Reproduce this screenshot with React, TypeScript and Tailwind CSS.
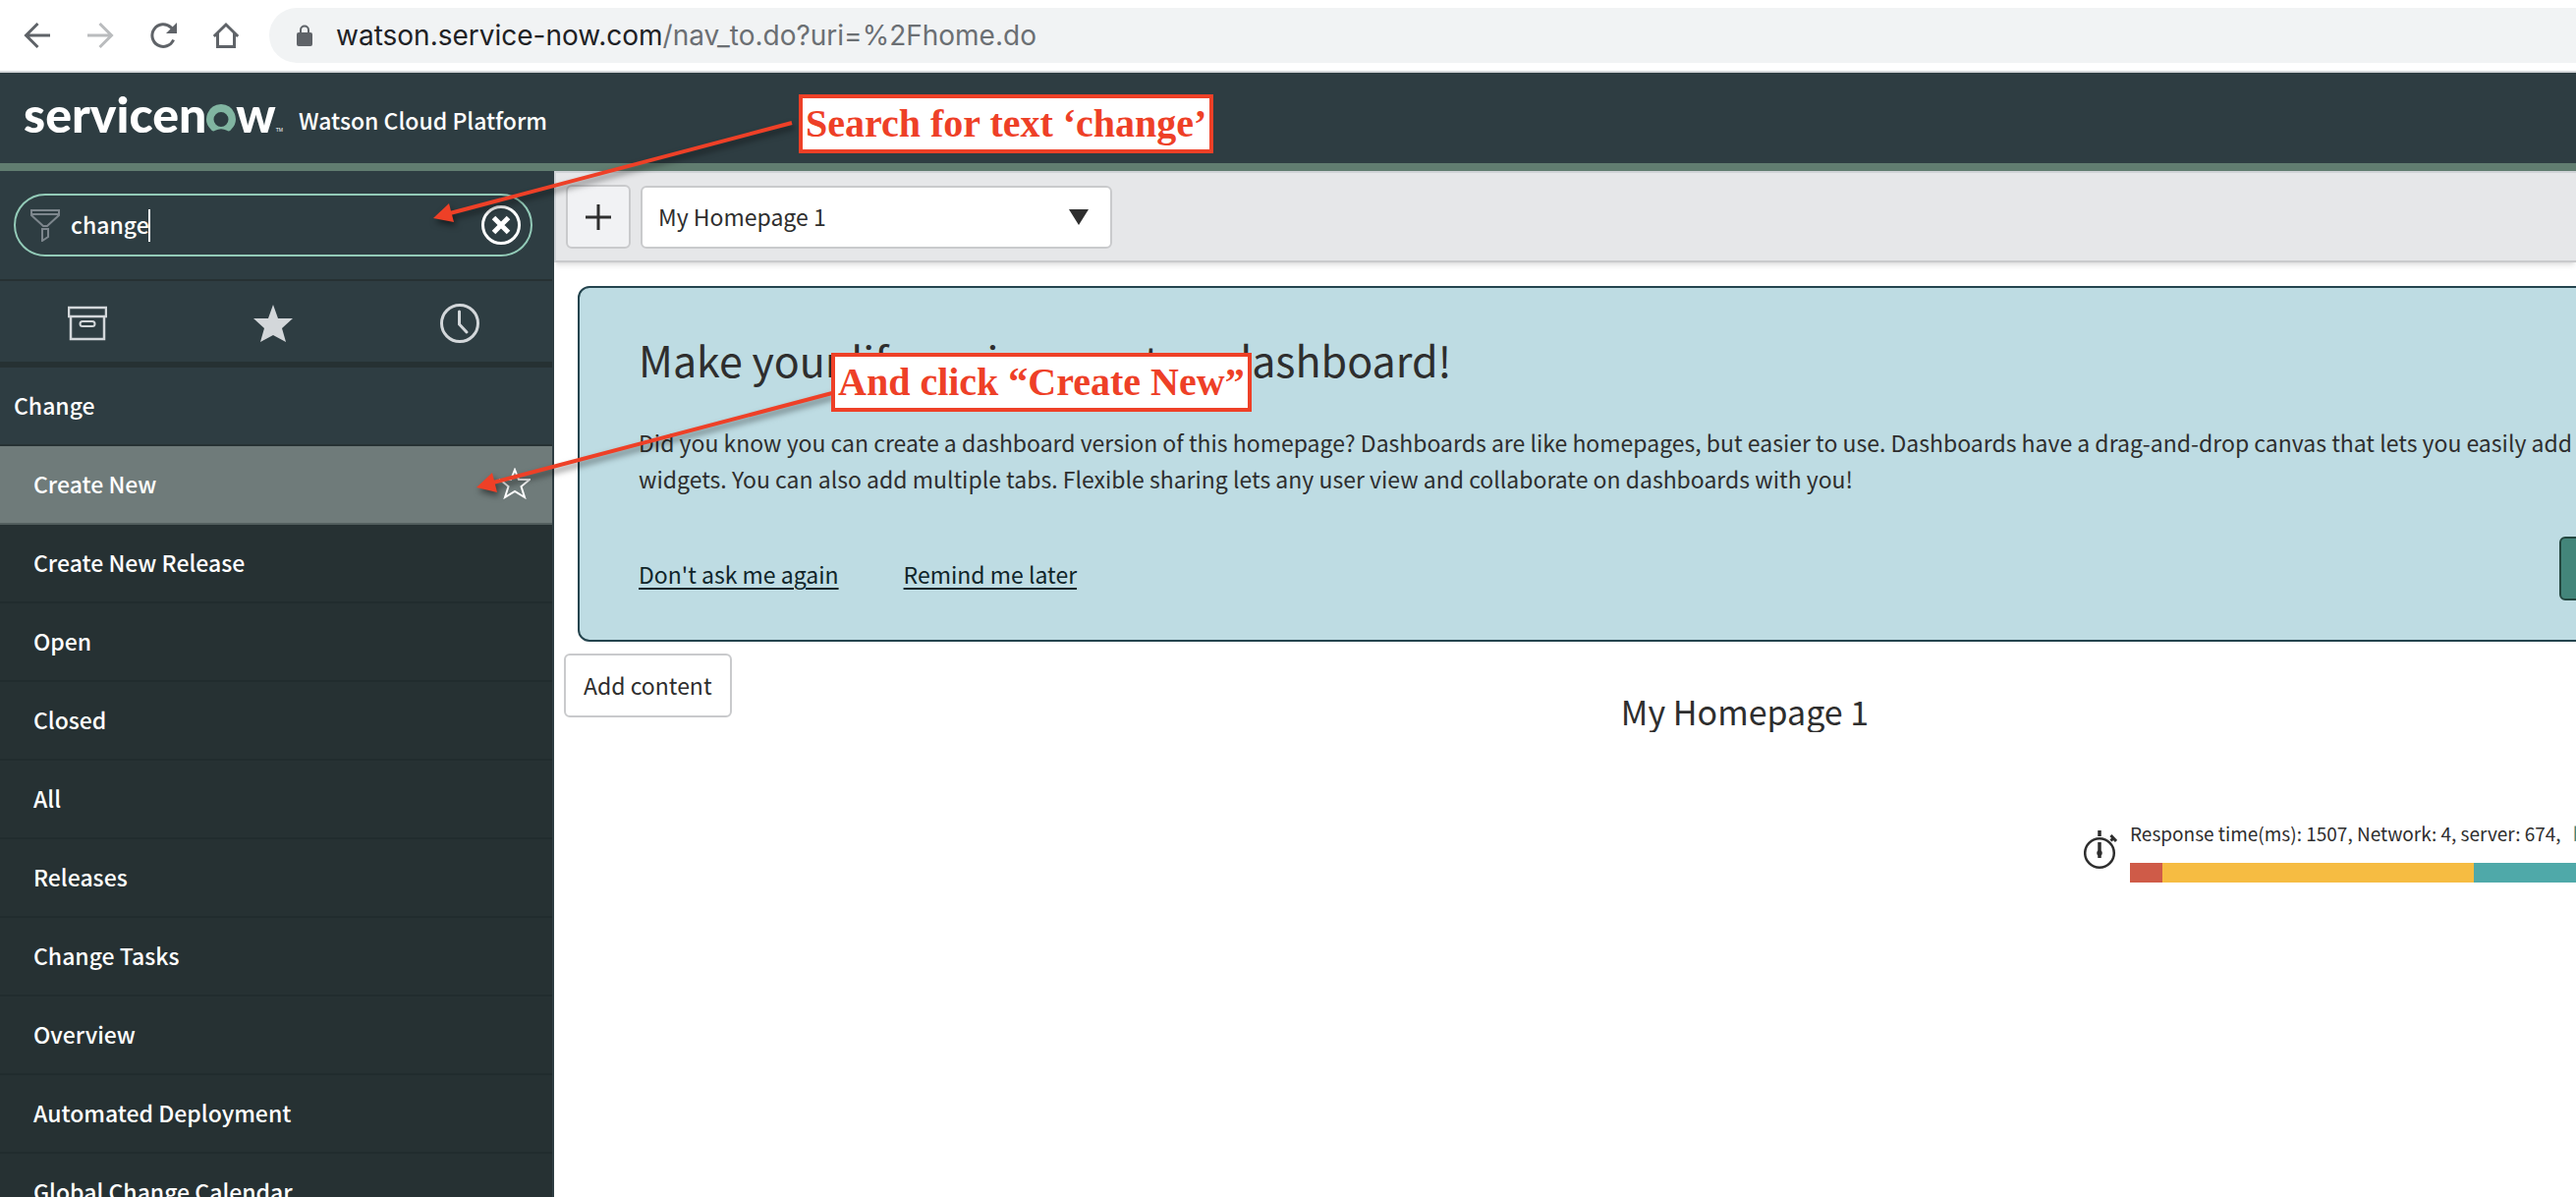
import React from "react";

const navItems = [
  "Create New",
  "Create New Release",
  "Open",
  "Closed",
  "All",
  "Releases",
  "Change Tasks",
  "Overview",
  "Automated Deployment",
  "Global Change Calendar",
];

function BrowserBar() {
  return (
    <div className="flex h-[74px] items-center border-b-2 border-[#d6d8db] bg-white pl-5 text-[#5f6368]">
      <div className="flex items-center gap-7">
        <button aria-label="Back" className="size-9">
          <svg viewBox="0 0 36 36" className="size-9" fill="none" stroke="currentColor" strokeWidth="3">
            <path d="M31 18H7M18.500 6L6.500 18L18.500 30" />
          </svg>
        </button>
        <button aria-label="Forward" className="size-9 text-[#babcbe]">
          <svg viewBox="0 0 36 36" className="size-9" fill="none" stroke="currentColor" strokeWidth="3">
            <path d="M5 18H29M17.500 6L29.500 18L17.500 30" />
          </svg>
        </button>
        <button aria-label="Reload" className="size-9">
          <svg viewBox="0 0 36 36" className="size-9" fill="none" stroke="currentColor" strokeWidth="3">
            <path d="M28.600 22.500A11.300 11.300 0 1 1 26 9.900L28 12" />
            <path d="M32 5V16H21Z" fill="currentColor" stroke="none" />
          </svg>
        </button>
        <button aria-label="Home" className="size-9">
          <svg viewBox="0 0 36 36" className="size-9" fill="none" stroke="currentColor" strokeWidth="3">
            <path d="M5.800 19L18 7L30.200 19M9.500 16V29.500H26.500V16" />
          </svg>
        </button>
      </div>
      <div className="ml-[26px] flex h-14 flex-1 items-center rounded-l-full bg-[#f1f3f4] pl-7 font-[Inter,sans-serif] text-[28px]">
        <svg viewBox="0 0 16 22" className="mr-6 h-[22px] w-4" fill="none">
          <rect y="8" width="16" height="14" rx="2" fill="#5f6368" />
          <path d="M4 9V5.500A4 4 0 0 1 12 5.500V9" stroke="#5f6368" strokeWidth="2" />
        </svg>
        <a href="#home" className="whitespace-nowrap">
          <span className="text-[#202124]">watson.service-now.com</span>
          <span className="text-[#6b6f73]">/nav_to.do?uri=%2Fhome.do</span>
        </a>
      </div>
    </div>
  );
}

function Header() {
  return (
    <header className="flex h-[100px] items-center border-b-8 border-[#617d70] bg-[#2e3d42] pl-6 text-white">
      <div className="flex items-end pb-2 font-[Lato,sans-serif] text-[50px] leading-[60px] font-black" aria-label="servicenow">
        <span>servicen</span>
        <svg viewBox="0 0 30 28" className="mb-3 h-7 w-[30px]" fill="#81b5a1">
          <path d="M15 0A15 15 0 0 0 4.500 25.500Q6.500 28.500 9 26.800Q15 23.500 21 26.800Q23.500 28.500 25.500 25.500A15 15 0 0 0 15 0ZM15 8A7.500 7.500 0 1 1 15 23A7.500 7.500 0 1 1 15 8Z" fillRule="evenodd" />
        </svg>
        <span>w</span>
        <span className="pb-2 font-['Liberation_Sans',sans-serif] text-[5px] leading-[12px] font-normal">TM</span>
      </div>
      <span className="ml-4 pt-1 text-[23px] font-medium">Watson Cloud Platform</span>
    </header>
  );
}

function Sidebar() {
  return (
    <aside className="w-[564px] shrink-0 border-r-2 border-[#2e3d42] bg-[#263133] text-[23px] font-medium text-white">
      <div className="bg-[#2e3d42] px-[14px] pt-[23px] pb-[23px]">
        <div className="flex h-16 w-[528px] items-center rounded-full border-2 border-[#93cbb8] pr-[10px] pl-[15px]">
          <svg viewBox="0 0 30 34" className="h-[34px] w-[30px]" fill="none" stroke="#7d868d" strokeWidth="2">
            <path d="M1 2H29V7L17 18H13L1 7ZM1 6H29M12 21H18V29L12 33Z" />
          </svg>
          <input aria-label="Filter navigator" defaultValue="change" className="ml-[11px] h-10 w-[79px] bg-transparent pb-0.5 outline-none" />
          <span className="h-[33px] w-0.5 bg-white" />
          <button aria-label="Clear filter" className="ml-auto size-10">
            <svg viewBox="0 0 40 40" className="size-10" fill="none" stroke="white">
              <circle cx="20" cy="20" r="18.500" strokeWidth="3" />
              <path d="M12.500 12.500L27.500 27.500M27.500 12.500L12.500 27.500" strokeWidth="5" />
            </svg>
          </button>
        </div>
      </div>
      <div className="flex h-[90px] items-center border-t-2 border-b-6 border-[#263133] bg-[#2e3d42] pt-1 text-[#d3d7da]">
        <button aria-label="All applications" className="flex w-[178px] justify-center">
          <svg viewBox="0 0 40 40" className="size-10" fill="none" stroke="currentColor" strokeWidth="2">
            <path d="M1 4H39V13H1ZM3 13V36H37V13" strokeWidth="2.500" />
            <rect x="12.500" y="18" width="15" height="5" rx="2.500" />
          </svg>
        </button>
        <button aria-label="Favorites" className="flex w-[200px] justify-center">
          <svg viewBox="0 0 40 40" className="size-10" fill="currentColor">
            <path d="M20 1L25 15H40L29 25L33 39L20 32L7 39L11 25L0 15H15Z" />
          </svg>
        </button>
        <button aria-label="History" className="flex w-[180px] justify-center">
          <svg viewBox="0 0 40 40" className="size-10" fill="none" stroke="currentColor" strokeWidth="3">
            <circle cx="20" cy="20" r="18.500" />
            <path d="M19.500 8V21L27 29" strokeLinecap="round" />
          </svg>
        </button>
      </div>
      <h2 className="flex h-20 items-center border-b-2 border-[#263133] bg-[#2e3d42] pb-0.5 pl-[14px]">Change</h2>
      <nav>
        {navItems.map((item, i) => (
          <a
            key={item}
            href="#nav"
            className={
              i === 0
                ? "flex h-20 items-center justify-between border-b-2 border-[#525e5e] bg-[#6f7b7a] pr-[22px] pb-0.5 pl-[34px]"
                : "flex h-20 items-center border-b-2 border-[#212c2e] pb-0.5 pl-[34px]"
            }
          >
            {item}
            {i === 0 && (
              <svg viewBox="0 0 32 32" className="size-8" fill="none" stroke="white" strokeWidth="2">
                <path d="M16 2L20 12H31L22.500 19L26 30L16 24L6 30L9.500 19L1 12H12Z" />
              </svg>
            )}
          </a>
        ))}
      </nav>
    </aside>
  );
}

function Main() {
  return (
    <main className="min-w-0 flex-1 overflow-hidden bg-white text-[23px] text-[#2e2e2e]">
      <div className="flex h-[93px] items-center gap-[10px] border-t-2 border-b-2 border-l-2 border-[#c9cacc] border-t-[#d0d3d7] border-l-[#d0d3d7] bg-[#e6e7e9] pl-[10px] shadow-md">
        <button aria-label="Add" className="flex h-[65px] w-[66px] items-center justify-center rounded-md border-2 border-[#c9cacc] bg-[#f1f2f4]">
          <svg viewBox="0 0 26 26" className="size-[26px]" stroke="#2e2e2e" strokeWidth="3">
            <path d="M0 13H26M13 0V26" />
          </svg>
        </button>
        <div className="relative">
          <select aria-label="Homepage" className="h-16 w-[480px] appearance-none rounded-md border-2 border-[#c9cacc] bg-white pl-4">
            <option>My Homepage 1</option>
          </select>
          <svg viewBox="0 0 20 16" className="pointer-events-none absolute top-6 right-6 h-4 w-5" fill="#2e2e2e">
            <path d="M0 0H20L10 16Z" />
          </svg>
        </div>
      </div>
      <div className="-mr-[366px]">
        <section className="mx-6 mt-6 rounded-xl border-2 border-[#24444e] bg-[#bedce3] px-[60px] pt-[39px] pb-10">
          <h1 className="text-[43px] leading-[66px]">Make your life easier: create a dashboard!</h1>
          <p className="mt-[34px] leading-[37px]">
            Did you know you can create a dashboard version of this homepage? Dashboards are like homepages, but easier to use. Dashboards have a drag-and-drop canvas that lets you easily add and rearrange
            <br />
            widgets. You can also add multiple tabs. Flexible sharing lets any user view and collaborate on dashboards with you!
          </p>
          <div className="mt-10 flex h-[65px] items-center text-[#10252a]">
            <div className="flex gap-[66px] pt-3">
              <a href="#never" className="underline decoration-2 underline-offset-4">Don't ask me again</a>
              <a href="#later" className="underline decoration-2 underline-offset-4">Remind me later</a>
            </div>
            <button aria-label="Create dashboard" className="ml-auto h-[65px] w-[297px] rounded-md border-2 border-[#244740] bg-[#43857a]" />
          </div>
        </section>
        <div className="ml-[10px] pt-3">
          <button className="h-[65px] rounded-md border-2 border-[#c9cacc] bg-white px-[18px]">Add content</button>
        </div>
        <h2 className="-mt-8 h-[47px] overflow-hidden text-center text-[34px] leading-[52px]">My Homepage 1</h2>
        <div className="mt-[89px] ml-[1557px] flex">
          <svg viewBox="0 0 34 40" className="mt-[11px] h-10 w-[34px]" fill="none" stroke="#2e2e2e" strokeWidth="2.500">
            <circle cx="16" cy="23" r="14.800" />
            <path d="M16 12V28M16 0V6" strokeWidth="3.500" />
            <circle cx="16" cy="23" r="1.500" fill="#2e2e2e" />
            <path d="M27.500 5L33 11M30 8L27.500 10.500" strokeWidth="3" />
          </svg>
          <div className="ml-[13px] w-[600px]">
            <div className="flex gap-3 text-[19px] leading-7 whitespace-nowrap">
              <span>Response time(ms): 1507, Network: 4, server: 674,</span>
              <a href="#browser" className="text-[#43857a]">browser: 829</a>
            </div>
            <div className="mt-4 flex h-5">
              <span className="w-[33px] bg-[#cf5b48]" />
              <span className="w-[317px] bg-[#f6bc42]" />
              <span className="flex-1 bg-[#4fa9a9]" />
            </div>
          </div>
        </div>
      </div>
    </main>
  );
}

function Annotations() {
  return (
    <div className="pointer-events-none absolute inset-0 font-['Liberation_Serif',serif] text-[40px] leading-[54px] font-bold whitespace-nowrap text-[#ee4027]">
      <svg className="absolute top-0 left-0 h-[520px] w-[900px] drop-shadow-[2px_4px_3px_rgba(0,0,0,0.5)]" viewBox="0 0 900 520" stroke="#ee4027" strokeWidth="4" fill="#ee4027">
        <path d="M806 125L458 217" />
        <path d="M441 222L457 207L462 226Z" stroke="none" />
        <path d="M847 400L502 491" />
        <path d="M485 496L501 481L506 501Z" stroke="none" />
      </svg>
      <div className="absolute top-24 left-[813px] border-4 border-[#ee4027] bg-white px-[3px] leading-[52px]">Search for text ‘change’</div>
      <div className="absolute top-[359px] left-[846px] border-4 border-[#ee4027] bg-white px-[3px] leading-[52px]">And click “Create New”</div>
    </div>
  );
}

export default function App() {
  return (
    <div className="relative h-screen overflow-hidden bg-white font-['Noto_Sans_CJK_SC',sans-serif]">
      <BrowserBar />
      <Header />
      <div className="flex">
        <Sidebar />
        <Main />
      </div>
      <Annotations />
    </div>
  );
}
